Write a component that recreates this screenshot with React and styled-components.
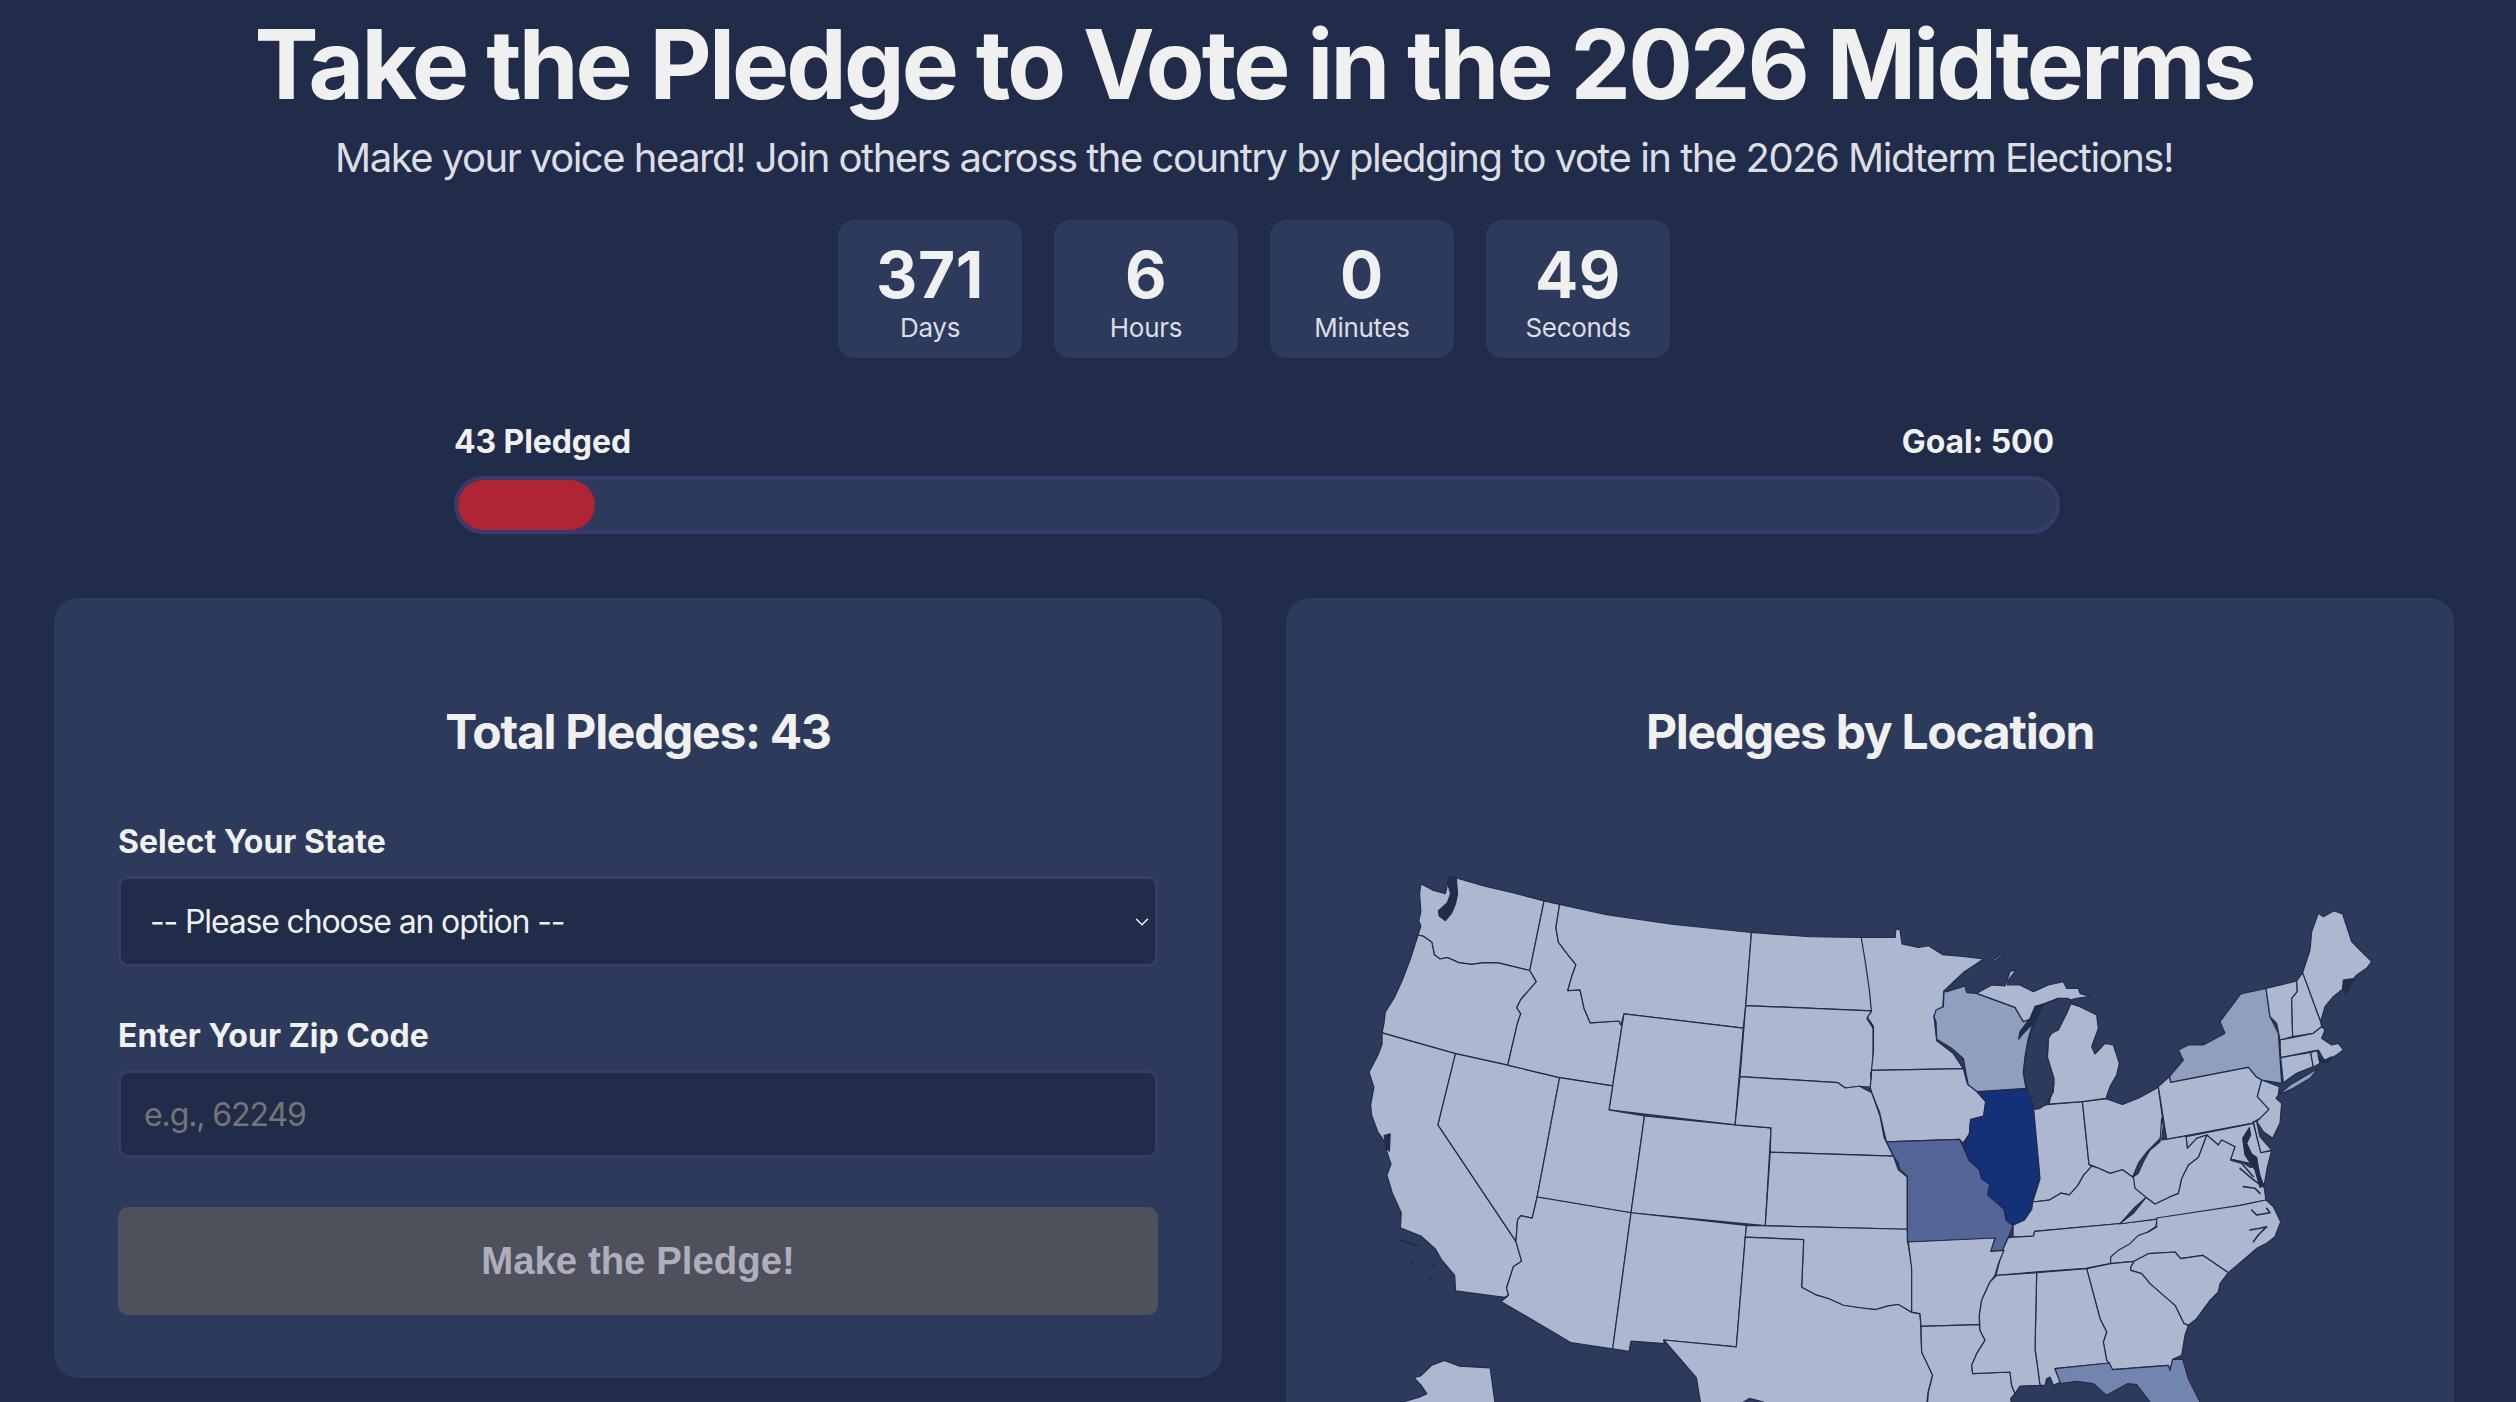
import React from "react";
import styled, { createGlobalStyle } from "styled-components";
import { ChevronDown } from "lucide-react";

const GlobalStyle = createGlobalStyle`
  html, body {
    margin: 0;
    background: #212b4a;
    overflow: hidden;
  }
  #root {
    height: 1402px;
    overflow: hidden;
  }
  * {
    box-sizing: border-box;
  }
`;

const LAND = "#aeb7d0";
const LOW = "#919fbf";
const MID = "#7285ae";
const HIGH = "#536697";
const TOP = "#143078";
const WATER = "#2d3a5c";
const EDGE = "#212b4a";

// Each map outline is noted in the frame it was easiest to read it in.
const FRAMES = {
  W: "translate(1280 840) scale(0.40816 0.35842)",
  E: "translate(1800 840) scale(0.40816 0.35842)",
  C: "translate(1920 950) scale(0.33333)",
  N: "translate(2150 900) scale(0.33333)",
  M: "translate(2110 1080) scale(0.33333)",
  S: "translate(1880 1202) scale(0.33333)",
  G: "translate(2040 1202) scale(0.33333)",
};

const STATES = [
  ["W", LAND, "345,122 375,140 405,150 415,100 430,105 500,128 580,150 647,170 612,364 535,343 500,342 470,347 438,342 410,328 392,332 378,320 372,285 350,268 338,265 345,240 340,225 345,200 342,150"],
  ["W", LAND, "338,265 350,268 372,285 378,320 392,332 410,328 438,342 470,347 500,342 535,343 612,364 628,395 590,445 580,468 590,485 582,510 558,628 430,596 250,538 255,510 258,480 280,440 300,390 320,330"],
  ["W", LAND, "250,538 430,596 387,795 578,1120 592,1175 572,1190 555,1250 560,1270 550,1276 430,1258 428,1215 395,1170 380,1140 345,1105 295,1082 297,1040 275,985 262,935 272,905 262,870 255,840 240,815 225,770 222,740 230,690 218,648 240,600 250,570"],
  ["W", LAND, "430,596 558,628 685,663 630,996 618,1055 590,1048 582,1060 578,1120 387,795"],
  ["W", LAND, "647,170 685,180 676,245 682,285 705,320 725,348 715,380 705,420 735,418 745,470 760,510 830,505 838,518 815,686 685,663 558,628 582,510 590,485 580,468 590,445 628,395 612,364"],
  ["W", LAND, "685,180 800,208 960,235 1155,258 1141,462 1135,525 843,485 835,516 830,505 760,510 745,470 735,418 705,420 715,380 725,348 705,320 682,285 676,245"],
  ["W", LAND, "843,485 1135,525 1115,795 806,753 815,686 838,518"],
  ["W", LAND, "685,663 815,686 806,753 893,770 860,1040 630,996"],
  ["W", LAND, "893,770 1115,795 1203,803 1189,1076 860,1040"],
  ["W", LAND, "630,996 860,1040 815,1420 712,1402 542,1288 560,1270 555,1250 572,1190 592,1175 578,1120 582,1060 590,1048 618,1055"],
  ["W", LAND, "860,1040 1143,1075 1140,1108 1118,1414 940,1395 942,1405 860,1398 855,1427 815,1420"],
  ["W", LAND, "1155,258 1300,270 1425,272 1440,360 1450,477 1141,462"],
  ["W", LAND, "1141,462 1450,477 1438,498 1453,525 1453,640 1447,650 1450,690 1420,687 1385,692 1367,677 1127,660"],
  ["W", LAND, "1127,660 1367,677 1385,692 1420,687 1450,705 1470,770 1480,830 1503,882 1201,871 1203,803 1115,795"],
  ["W", LAND, "1201,871 1503,882 1515,920 1537,940 1537,1086 1189,1076 1201,871"],
  ["W", LAND, "1143,1075 1537,1086 1538,1122 1550,1200 1548,1318 1515,1296 1490,1300 1460,1310 1420,1305 1380,1298 1345,1280 1315,1270 1278,1248 1283,1115 1140,1108"],
  ["W", LAND, "1140,1108 1283,1115 1278,1248 1315,1270 1345,1280 1380,1298 1420,1305 1460,1310 1490,1300 1515,1296 1548,1318 1568,1322 1570,1356 1572,1428 1599,1493 1588,1540 1585,1568 1589,1640 1190,1640 1185,1568 1150,1558 1130,1572 1035,1590 1030,1568 1020,1500 990,1460 940,1395 1118,1414"],
  ["W", LAND, "328,1500 345,1495 372,1465 403,1452 440,1468 515,1473 535,1640 300,1640 300,1568 340,1555 360,1545 345,1520"],

  ["E", LAND, "150,272 233,272 235,248 245,250 250,290 290,300 315,295 350,320 400,325 450,332 400,370 352,422 350,465 328,490 335,560 375,595 400,638 175,643 180,590 180,520 165,495 175,478 170,420 160,340"],
  ["E", LAND, "175,643 400,638 410,680 432,700 455,730 450,770 418,780 415,820 400,845 390,835 212,842 205,810 195,760 176,705 172,690 175,660"],
  ["E", HIGH, "212,842 390,835 400,855 415,895 440,920 445,945 465,960 460,990 500,1030 505,1060 522,1075 510,1110 495,1148 465,1146 478,1112 263,1122 263,938 245,920 240,900 228,880"],
  ["E", TOP, "432,700 555,695 572,745 585,905 588,945 570,1000 568,1030 550,1060 522,1075 505,1060 500,1030 460,990 465,960 445,945 440,920 415,895 400,855 415,820 418,780 450,770 455,730"],
  ["E", LAND, "572,745 610,738 692,730 708,905 715,910 695,935 680,965 660,990 640,985 610,1005 570,1010 588,945 585,905"],
  ["E", LAND, "692,730 750,722 790,738 830,720 878,690 888,775 885,830 850,870 830,900 815,940 790,920 760,930 730,915 708,905"],
  ["E", LAND, "570,1010 610,1005 640,985 660,990 680,965 695,935 715,910 730,915 760,930 790,920 815,940 850,995 820,1025 785,1070 575,1092 572,1105 522,1108 522,1075 550,1060 568,1030"],
  ["E", LAND, "522,1108 572,1105 575,1092 785,1070 875,1058 872,1078 850,1095 810,1130 765,1160 760,1182 700,1195 580,1205 480,1215 495,1148 510,1110"],

  ["C", LOW, "72,125 80,125 135,108 140,128 170,130 285,172 310,215 365,165 340,215 325,265 315,320 310,370 318,415 172,425 145,405 138,370 130,325 95,295 50,268 48,215 42,200 48,180 70,170"],
  ["C", LAND, "170,130 215,105 255,108 270,65 290,58 265,90 262,105 300,105 340,125 385,105 430,95 440,115 475,115 480,130 510,140 470,145 450,150 415,145 375,160 345,170 362,168 340,205 310,215 285,172"],
  ["C", LAND, "450,160 480,170 530,195 535,235 515,290 525,312 555,280 580,285 598,340 590,375 570,410 558,445 487,455 387,462 402,400 382,330 385,260 400,240 440,190"],
  ["C", LAND, "218,30 245,12 250,14 224,32"],

  ["N", LOW, "62,547 58,530 100,480 85,450 115,435 160,435 225,400 210,365 272,282 348,265 360,350 385,400 395,550 335,540 318,530 295,502"],
  ["N", LAND, "25,560 58,530 62,547 295,502 318,530 335,540 322,590 357,628 330,655 305,670 50,718"],
  ["N", LOW, "385,585 420,555 505,505 480,535 430,565"],
  ["N", LAND, "348,265 440,243 442,275 425,295 428,410 390,420 380,370 360,350"],
  ["N", LAND, "440,243 458,218 512,365 515,380 490,400 428,410 425,295 442,275"],
  ["N", LAND, "458,218 480,150 485,95 505,40 520,50 552,32 578,42 605,125 630,150 665,185 650,205 620,225 600,250 575,270 550,290 525,320 512,365"],
  ["N", LAND, "390,420 490,400 515,380 525,390 515,415 545,435 565,430 580,450 560,465 525,485 505,450 480,455 392,473"],
  ["N", LAND, "392,473 482,457 490,500 440,520 400,548"],
  ["N", LAND, "482,457 502,452 510,490 490,502"],
  ["N", LAND, "335,540 388,560 385,585 378,595 395,610 390,670 368,715 340,695 320,665 330,655 357,628 322,590"],

  ["M", LAND, "430,125 440,125 450,170 485,210 452,220"],
  ["M", LAND, "228,170 430,130 452,218 485,212 472,262 462,318 440,262 420,250 395,245 362,238 375,200 335,180 325,195 290,165 260,175 232,205"],
  ["M", LAND, "28,432 70,400 108,352 135,372 180,350 205,340 215,295 235,255 265,232 290,165 325,195 335,180 375,200 362,238 395,245 420,262 440,260 450,300 462,320 468,360 300,395 140,417"],
  ["M", LAND, "155,115 160,135 155,180 168,178 228,168 232,205 260,175 290,165 265,232 235,255 215,295 205,340 180,350 135,372 108,352 75,325 70,290 85,280 100,245 120,210 150,185"],

  ["G", LAND, "212,185 212,165 235,145 270,125 295,100 325,90 350,75 350,48 600,10 678,-6 700,14 722,59 705,104 680,124 650,139 610,174 565,212 488,160 422,170 405,150 325,155 282,178"],
  ["G", LAND, "282,178 325,155 405,150 422,170 488,160 565,212 540,245 535,270 510,295 470,350 445,370 432,365 405,310 370,280 330,245 305,215 272,205 272,195"],
  ["G", LAND, "140,200 212,185 282,178 272,195 272,205 305,215 330,245 370,280 405,310 432,365 445,370 435,400 425,460 398,472 390,505 385,490 218,503 200,475 190,420 200,390 180,350"],
  ["G", LAND, "-10,212 140,200 180,350 200,390 190,420 200,475 208,483 45,500 62,540 40,550 30,525 20,530 15,550 0,550 -15,440"],
  ["G", MID, "45,500 208,483 218,503 385,490 390,505 398,472 428,472 445,530 480,600 520,700 400,700 330,600 290,548 262,545 200,580 160,545 110,538 62,545"],

  ["S", LAND, "85,120 345,108 332,148 372,145 355,185 345,220 330,240 305,295 298,340 298,368 123,373 120,335 95,330 95,200"],
  ["S", LAND, "123,373 298,368 300,385 315,415 290,455 275,490 278,515 390,510 395,550 405,575 392,590 400,640 140,640 145,570 158,520 125,450"],
  ["S", LAND, "350,220 470,212 465,440 480,550 420,552 405,575 395,550 390,510 278,515 275,490 290,455 315,415 300,385 298,340 305,295 330,240"],
];

// Water that bites into the land: lakes, bays and sounds.
const WATERS = [
  ["C", WATER, "345,478 325,430 310,365 318,310 325,270 345,215 370,165 415,145 445,145 455,155 440,190 415,240 395,250 385,265 382,320 402,385 400,425 380,462 360,475"],
  ["C", EDGE, "296,267 300,245 330,205 345,170 362,165 355,195 335,225 310,250"],
  ["W", EDGE, "415,100 432,108 435,150 430,178 420,205 405,225 390,212 388,198 410,175 418,150 412,125"],
  ["W", EDGE, "255,825 270,820 268,868 260,860"],
  ["N", EDGE, "580,240 610,236 600,262 590,285 578,265"],
  ["N", EDGE, "505,470 525,480 545,470 535,488 510,488"],
  ["M", EDGE, "418,143 422,165 410,190 425,222 440,232 445,262 452,300 462,318 450,322 435,270 405,225 398,175"],
];

const RIVERS = [
  ["M", "362,240 395,250 430,290"],
  ["M", "390,265 425,295 445,310"],
  ["M", "400,320 435,325 450,340"],
  ["M", "425,390 440,405 480,398 470,385"],
  ["M", "420,450 450,445 470,440 445,465 430,485"],
  ["W", "290,1115 340,1132"],
  ["W", "320,1178 328,1185"],
  ["W", "370,1182 380,1192"],
  ["W", "365,1215 370,1225"],
];

const COUNTDOWN = [
  { value: 371, label: "Days" },
  { value: 6, label: "Hours" },
  { value: 0, label: "Minutes" },
  { value: 49, label: "Seconds" },
];

const Page = styled.div`
  height: 1402px;
  padding: 0 62px 0 54px;
  font-family: Inter, "Noto Sans", sans-serif;
  color: #f0f0f0;
`;

const Title = styled.h1`
  margin: 0;
  padding-top: 6px;
  font-size: 96px;
  line-height: 116px;
  font-weight: 700;
  letter-spacing: -2.9px;
  text-align: center;
`;

const Subtitle = styled.p`
  margin: 12px 0 0;
  font-size: 40px;
  line-height: 48px;
  letter-spacing: -1.5px;
  text-align: center;
  color: #dcdee4;
`;

const Countdown = styled.div`
  display: flex;
  justify-content: center;
  gap: 32px;
  margin-top: 38px;
`;

const CountBox = styled.div`
  width: 184px;
  height: 138px;
  padding-top: 19px;
  border-radius: 16px;
  background: #2d3a5c;
  text-align: center;
`;

const CountValue = styled.div`
  font-size: 64px;
  line-height: 72px;
  font-weight: 700;
  letter-spacing: 0.6px;
`;

const CountLabel = styled.div`
  margin-top: 1px;
  font-size: 26px;
  line-height: 32px;
  letter-spacing: -0.3px;
  color: #dcdee4;
`;

const Progress = styled.section`
  width: 1606px;
  margin: 65px 0 0 400px;
`;

const ProgressLabels = styled.div`
  display: flex;
  justify-content: space-between;
  padding-right: 6px;
  font-size: 32px;
  line-height: 38px;
  font-weight: 700;
  letter-spacing: -0.1px;
`;

const ProgressTrack = styled.div`
  height: 58px;
  margin-top: 15px;
  border: 4px solid #3c3a6b;
  border-radius: 29px;
  background: #2d3a5c;
  overflow: hidden;
`;

const ProgressFill = styled.div`
  height: 100%;
  border-radius: 25px;
  background: #b02535;
`;

const Columns = styled.div`
  display: grid;
  grid-template-columns: 1168px 1168px;
  gap: 64px;
  align-items: start;
  margin-top: 64px;
`;

const Card = styled.section`
  padding: 104px 64px 63px;
  border-radius: 24px;
  background: #2d3a5c;
`;

const CardTitle = styled.h2`
  margin: 0;
  font-size: 48px;
  line-height: 60px;
  font-weight: 700;
  letter-spacing: -1.3px;
  text-align: center;
`;

const Field = styled.div`
  margin-top: ${(p) => p.$top}px;
`;

const FieldLabel = styled.label`
  display: block;
  font-size: 32px;
  line-height: 38px;
  font-weight: 700;
  letter-spacing: 0;
`;

const SelectWrap = styled.div`
  position: relative;
  margin-top: 15px;
`;

const StateSelect = styled.select`
  display: block;
  width: 100%;
  height: 91px;
  padding: 0 29px;
  border: 3px solid #3c3a6b;
  border-radius: 10px;
  background: #212b4a;
  color: #f0f0f0;
  font-family: Inter, sans-serif;
  font-size: 32px;
  letter-spacing: -1.15px;
  appearance: none;
`;

const SelectChevron = styled(ChevronDown)`
  position: absolute;
  top: 35px;
  right: 5px;
  width: 22px;
  height: 22px;
  color: #f0f0f0;
  stroke-width: 1.6;
  pointer-events: none;
`;

const ZipInput = styled.input`
  display: block;
  width: 100%;
  height: 88px;
  margin-top: 15px;
  padding: 0 23px;
  border: 3px solid #3c3a6b;
  border-radius: 10px;
  background: #212b4a;
  color: #f0f0f0;
  font-family: Inter, sans-serif;
  font-size: 32px;
  letter-spacing: -1.1px;
  &::placeholder {
    color: #757575;
    opacity: 1;
  }
`;

const PledgeButton = styled.button`
  display: block;
  width: 100%;
  height: 108px;
  margin-top: 49px;
  border: 0;
  border-radius: 10px;
  background: #4e505c;
  color: #adafbe;
  font-family: "Liberation Sans", Arial, sans-serif;
  font-size: 38.4px;
  font-weight: 700;
`;

const MapSvg = styled.svg`
  display: block;
  width: 1040px;
  height: 650px;
  margin-top: 78px;
`;

const MapShape = styled.polygon`
  fill: ${(p) => p.$fill};
  stroke: #212b4a;
  stroke-width: 1.2;
  stroke-linejoin: round;
`;

const MapLine = styled.polyline`
  fill: none;
  stroke: #212b4a;
  stroke-width: 1.6;
  stroke-linecap: round;
  stroke-linejoin: round;
`;

const UsMap = () => (
  <MapSvg viewBox="1350 840 1040 650">
    {[...STATES, ...WATERS].map(([frame, fill, points], i) => (
      <g key={i} transform={FRAMES[frame]}>
        <MapShape $fill={fill} points={points} vectorEffect="non-scaling-stroke" />
      </g>
    ))}
    {RIVERS.map(([frame, points], i) => (
      <g key={i} transform={FRAMES[frame]}>
        <MapLine points={points} vectorEffect="non-scaling-stroke" />
      </g>
    ))}
  </MapSvg>
);

const App = () => {
  const pledged = 43;
  const goal = 500;

  return (
    <>
      <GlobalStyle />
      <Page>
        <Title>Take the Pledge to Vote in the 2026 Midterms</Title>
        <Subtitle>
          Make your voice heard! Join others across the country by pledging to vote in the 2026
          Midterm Elections!
        </Subtitle>
        <Countdown>
          {COUNTDOWN.map((item) => (
            <CountBox key={item.label}>
              <CountValue>{item.value}</CountValue>
              <CountLabel>{item.label}</CountLabel>
            </CountBox>
          ))}
        </Countdown>
        <Progress>
          <ProgressLabels>
            <span>{pledged} Pledged</span>
            <span>Goal: {goal}</span>
          </ProgressLabels>
          <ProgressTrack>
            <ProgressFill style={{ width: `${(pledged / goal) * 100}%` }} />
          </ProgressTrack>
        </Progress>
        <Columns>
          <Card>
            <CardTitle>Total Pledges: {pledged}</CardTitle>
            <Field $top={61}>
              <FieldLabel htmlFor="state">Select Your State</FieldLabel>
              <SelectWrap>
                <StateSelect id="state" defaultValue="">
                  <option value="">-- Please choose an option --</option>
                </StateSelect>
                <SelectChevron />
              </SelectWrap>
            </Field>
            <Field $top={50}>
              <FieldLabel htmlFor="zip">Enter Your Zip Code</FieldLabel>
              <ZipInput id="zip" placeholder="e.g., 62249" />
            </Field>
            <PledgeButton disabled>Make the Pledge!</PledgeButton>
          </Card>
          <Card>
            <CardTitle>Pledges by Location</CardTitle>
            <UsMap />
          </Card>
        </Columns>
      </Page>
    </>
  );
};

export default App;
